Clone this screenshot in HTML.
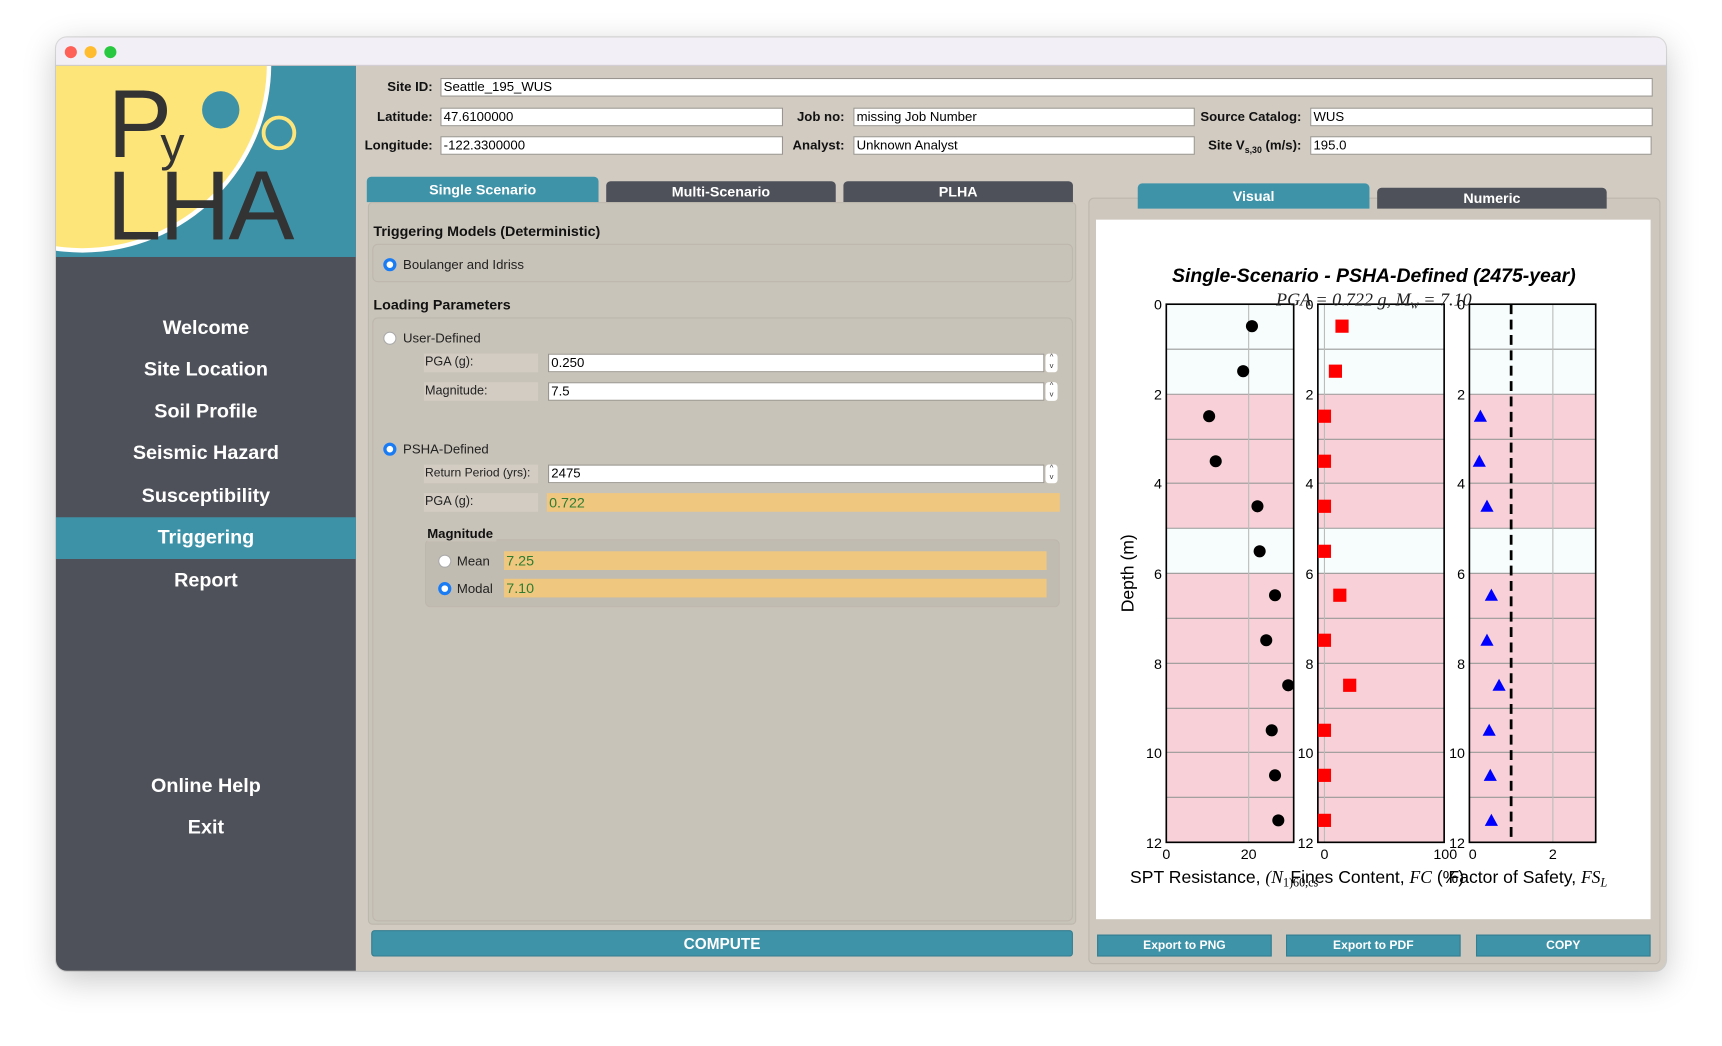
<!DOCTYPE html>
<html><head><meta charset="utf-8"><style>
*{box-sizing:border-box;margin:0;padding:0}
html,body{width:1722px;height:1045px;overflow:hidden;background:#fff;font-family:"Liberation Sans",Arial,sans-serif}
#w{position:absolute;left:0;top:0;width:1568px;height:952px;transform:scale(1.09821);transform-origin:0 0}
.a{position:absolute}
.win{left:51px;top:34px;width:1466px;height:850px;border-radius:10px;overflow:hidden;background:#d1cbc2;box-shadow:0 8px 30px rgba(0,0,0,.22),0 0 0 1px rgba(0,0,0,.12)}
.tl{width:11px;height:11px;border-radius:50%;top:8px}
.nav{width:273px;text-align:center;color:#fff;font-weight:bold;font-size:18px;left:0}
.lab{font-size:12px;font-weight:bold;color:#111;text-align:right;white-space:nowrap}
.inp{background:#fff;border:1px solid #9a968f;height:17px;font-size:12px;padding-left:2px;line-height:15px;color:#000}
.tab{color:#fff;font-weight:bold;font-size:13px;text-align:center;border-radius:4px 4px 0 0}
.gb{border:1px solid #bdb7ad;border-radius:5px;background:#c8c3b8}
.rad{width:12px;height:12px;border-radius:50%;background:#fff;border:1px solid #aaa}
.rad.on{background:#fff;border:3.5px solid #1a7cf5}
.t12{font-size:12px;color:#222}
.sl{background:#d2ccc3;font-size:11.5px;color:#222;padding-left:1px;height:17px;line-height:17px;white-space:nowrap;overflow:hidden}
.or{background:#f0c77f;color:#2e7d32;font-size:13px;padding-left:2px;height:17px;line-height:17px}
.spin{width:11px;height:17px;background:#fff;border-radius:3px;font-size:7px;line-height:8px;text-align:center;color:#333}
.btn{background:#3e93a8;color:#fff;font-weight:bold;text-align:center;border:1px solid #347e90}
</style></head><body><div id="w">
<div class="a win">
 <div class="a" style="left:0;top:0;width:1466px;height:26px;background:#f3eff6;border-bottom:1px solid #cfcbd2"></div>
 <div class="a tl" style="left:8px;background:#fe5f57"></div>
 <div class="a tl" style="left:26px;background:#febc2e"></div>
 <div class="a tl" style="left:44px;background:#28c840"></div>
 <div class="a" style="left:0;top:26px;width:273px;height:824px;background:#4e5159"></div>
 <svg class="a" style="left:0;top:26px" width="273" height="174" viewBox="51 60 273 174">
  <rect x="51" y="60" width="273" height="174" fill="#3e92a8"/>
  <circle cx="75" cy="58" r="172" fill="#fff"/>
  <circle cx="75" cy="58" r="168" fill="#fde57a"/>
  <circle cx="201" cy="100" r="17" fill="#3e92a8"/>
  <circle cx="254" cy="121" r="14" fill="none" stroke="#fde57a" stroke-width="3.5"/>
  <text x="98" y="143" font-family="Liberation Sans" font-size="88" fill="#333">P</text>
  <text x="146" y="146" font-family="Liberation Sans" font-size="44" fill="#333">y</text>
  <text x="97" y="218" font-family="Liberation Sans" font-size="90" fill="#333" letter-spacing="-2">LHA</text>
 </svg>
 <div class="a" style="left:0;top:437px;width:273px;height:38px;background:#3e92a8"></div>
 <div class="a nav" style="top:254px">Welcome</div>
 <div class="a nav" style="top:292px">Site Location</div>
 <div class="a nav" style="top:330px">Soil Profile</div>
 <div class="a nav" style="top:368px">Seismic Hazard</div>
 <div class="a nav" style="top:407px">Susceptibility</div>
 <div class="a nav" style="top:445px">Triggering</div>
 <div class="a nav" style="top:484px">Report</div>
 <div class="a nav" style="top:671px">Online Help</div>
 <div class="a nav" style="top:709px">Exit</div>
</div>
<div class="a lab" style="left:300px;width:94px;top:72px">Site ID:</div>
<div class="a inp" style="left:401px;top:71px;width:1104px">Seattle_195_WUS</div>
<div class="a lab" style="left:300px;width:94px;top:99px">Latitude:</div>
<div class="a inp" style="left:401px;top:98px;width:312px">47.6100000</div>
<div class="a lab" style="left:300px;width:94px;top:125px">Longitude:</div>
<div class="a inp" style="left:401px;top:124px;width:312px">-122.3300000</div>
<div class="a lab" style="left:690px;width:79px;top:99px">Job no:</div>
<div class="a inp" style="left:777px;top:98px;width:311px">missing Job Number</div>
<div class="a lab" style="left:690px;width:79px;top:125px">Analyst:</div>
<div class="a inp" style="left:777px;top:124px;width:311px">Unknown Analyst</div>
<div class="a lab" style="left:1090px;width:95px;top:99px">Source Catalog:</div>
<div class="a inp" style="left:1193px;top:98px;width:312px">WUS</div>
<div class="a lab" style="left:1090px;width:95px;top:125px">Site V<sub style="font-size:8px">s,30</sub> (m/s):</div>
<div class="a inp" style="left:1193px;top:124px;width:311px">195.0</div>
<div class="a tab" style="left:334px;top:161px;width:211px;height:23px;line-height:23px;background:#3e93a8">Single Scenario</div>
<div class="a tab" style="left:552px;top:165px;width:209px;height:19px;line-height:20px;background:#4e5159">Multi-Scenario</div>
<div class="a tab" style="left:768px;top:165px;width:209px;height:19px;line-height:20px;background:#4e5159">PLHA</div>
<div class="a" style="left:335px;top:184px;width:645px;height:658px;background:#c9c4b9;border:1px solid #bdb7ad;border-radius:4px"></div>
<div class="a" style="left:340px;top:203px;font-size:13px;font-weight:bold;color:#111">Triggering Models (Deterministic)</div>
<div class="a gb" style="left:339px;top:222px;width:638px;height:35px"></div>
<div class="a rad on" style="left:349px;top:235px"></div>
<div class="a t12" style="left:367px;top:234px">Boulanger and Idriss</div>
<div class="a" style="left:340px;top:270px;font-size:13px;font-weight:bold;color:#111">Loading Parameters</div>
<div class="a gb" style="left:339px;top:289px;width:638px;height:550px"></div>
<div class="a rad" style="left:349px;top:302px"></div>
<div class="a t12" style="left:367px;top:301px">User-Defined</div>
<div class="a sl" style="left:386px;top:322px;width:104px">PGA (g):</div>
<div class="a inp" style="left:499px;top:322px;width:452px">0.250</div>
<div class="a spin" style="left:952px;top:322px">^<br>v</div>
<div class="a sl" style="left:386px;top:348px;width:104px">Magnitude:</div>
<div class="a inp" style="left:499px;top:348px;width:452px">7.5</div>
<div class="a spin" style="left:952px;top:348px">^<br>v</div>
<div class="a rad on" style="left:349px;top:403px"></div>
<div class="a t12" style="left:367px;top:402px">PSHA-Defined</div>
<div class="a sl" style="left:386px;top:423px;width:104px;font-size:11px">Return Period (yrs):</div>
<div class="a inp" style="left:499px;top:423px;width:452px">2475</div>
<div class="a spin" style="left:952px;top:423px">^<br>v</div>
<div class="a sl" style="left:386px;top:449px;width:104px">PGA (g):</div>
<div class="a or" style="left:498px;top:449px;width:467px">0.722</div>
<div class="a gb" style="left:387px;top:491px;width:578px;height:62px;background:#c1bcb1"></div>
<div class="a" style="left:389px;top:479px;font-size:12px;font-weight:bold;color:#111;background:#c8c3b8;padding-right:3px">Magnitude</div>
<div class="a rad" style="left:399px;top:505px"></div>
<div class="a t12" style="left:416px;top:504px">Mean</div>
<div class="a or" style="left:459px;top:502px;width:494px">7.25</div>
<div class="a rad on" style="left:399px;top:530px"></div>
<div class="a t12" style="left:416px;top:529px">Modal</div>
<div class="a or" style="left:459px;top:527px;width:494px">7.10</div>
<div class="a btn" style="left:338px;top:847px;width:639px;height:24px;line-height:23px;font-size:14px;border-radius:3px">COMPUTE</div>
<div class="a" style="left:991px;top:180px;width:521px;height:698px;background:#cdc7bd;border:1px solid #bdb7ad;border-radius:5px"></div>
<div class="a tab" style="left:1036px;top:167px;width:211px;height:23px;line-height:24px;background:#3e93a8">Visual</div>
<div class="a tab" style="left:1254px;top:171px;width:209px;height:19px;line-height:19px;background:#4e5159">Numeric</div>
<div class="a" style="left:998px;top:200px;width:505px;height:637px;background:#fff"></div>
<div class="a btn" style="left:999px;top:851px;width:159px;height:20px;line-height:19px;font-size:11px">Export to PNG</div>
<div class="a btn" style="left:1171px;top:851px;width:159px;height:20px;line-height:19px;font-size:11px">Export to PDF</div>
<div class="a btn" style="left:1344px;top:851px;width:159px;height:20px;line-height:19px;font-size:11px">COPY</div>
<svg class="a" style="left:0;top:0" width="1568" height="952" font-family="Liberation Sans">
 <g>
  <rect x="1062" y="277" width="116" height="82" fill="#f7fdfd"/><rect x="1062" y="359" width="116" height="122" fill="#f7d1d7"/><rect x="1062" y="481" width="116" height="41" fill="#f7fdfd"/><rect x="1062" y="522" width="116" height="245" fill="#f7d1d7"/>
  <rect x="1200" y="277" width="115" height="82" fill="#f7fdfd"/><rect x="1200" y="359" width="115" height="122" fill="#f7d1d7"/><rect x="1200" y="481" width="115" height="41" fill="#f7fdfd"/><rect x="1200" y="522" width="115" height="245" fill="#f7d1d7"/>
  <rect x="1338" y="277" width="115" height="82" fill="#f7fdfd"/><rect x="1338" y="359" width="115" height="122" fill="#f7d1d7"/><rect x="1338" y="481" width="115" height="41" fill="#f7fdfd"/><rect x="1338" y="522" width="115" height="245" fill="#f7d1d7"/>
 </g>
 <g stroke="#999" stroke-width="1">
  <path d="M1062 318H1178M1062 359H1178M1062 400H1178M1062 440H1178M1062 481H1178M1062 522H1178M1062 563H1178M1062 604H1178M1062 645H1178M1062 685H1178M1062 726H1178"/>
  <path d="M1200 318H1315M1200 359H1315M1200 400H1315M1200 440H1315M1200 481H1315M1200 522H1315M1200 563H1315M1200 604H1315M1200 645H1315M1200 685H1315M1200 726H1315"/>
  <path d="M1338 318H1453M1338 359H1453M1338 400H1453M1338 440H1453M1338 481H1453M1338 522H1453M1338 563H1453M1338 604H1453M1338 645H1453M1338 685H1453M1338 726H1453"/>
  <path d="M1137 277V767M1206 277V767M1414 277V767" stroke="#bbb"/>
 </g>
 <g fill="none" stroke="#000" stroke-width="1.5">
  <rect x="1062" y="277" width="116" height="490"/><rect x="1200" y="277" width="115" height="490"/><rect x="1338" y="277" width="115" height="490"/>
 </g>
 <path d="M1376 277V767" stroke="#000" stroke-width="2.5" stroke-dasharray="9,5"/>
 <g fill="#000">
  <circle cx="1140" cy="297" r="5.5"/><circle cx="1132" cy="338" r="5.5"/><circle cx="1101" cy="379" r="5.5"/><circle cx="1107" cy="420" r="5.5"/><circle cx="1145" cy="461" r="5.5"/><circle cx="1147" cy="502" r="5.5"/><circle cx="1161" cy="542" r="5.5"/><circle cx="1153" cy="583" r="5.5"/><circle cx="1173" cy="624" r="5.5"/><circle cx="1158" cy="665" r="5.5"/><circle cx="1161" cy="706" r="5.5"/><circle cx="1164" cy="747" r="5.5"/>
 </g>
 <g fill="#f00">
  <rect x="1216" y="291" width="12" height="12"/><rect x="1210" y="332" width="12" height="12"/><rect x="1200" y="373" width="12" height="12"/><rect x="1200" y="414" width="12" height="12"/><rect x="1200" y="455" width="12" height="12"/><rect x="1200" y="496" width="12" height="12"/><rect x="1214" y="536" width="12" height="12"/><rect x="1200" y="577" width="12" height="12"/><rect x="1223" y="618" width="12" height="12"/><rect x="1200" y="659" width="12" height="12"/><rect x="1200" y="700" width="12" height="12"/><rect x="1200" y="741" width="12" height="12"/>
 </g>
 <g fill="#00f">
  <path d="M1348 373l6 11h-12z"/><path d="M1347 414l6 11h-12z"/><path d="M1354 455l6 11h-12z"/><path d="M1358 536l6 11h-12z"/><path d="M1354 577l6 11h-12z"/><path d="M1365 618l6 11h-12z"/><path d="M1356 659l6 11h-12z"/><path d="M1357 700l6 11h-12z"/><path d="M1358 741l6 11h-12z"/>
 </g>
 <g font-size="13" fill="#000" text-anchor="end">
  <text x="1058" y="282">0</text><text x="1058" y="364">2</text><text x="1058" y="445">4</text><text x="1058" y="527">6</text><text x="1058" y="609">8</text><text x="1058" y="690">10</text><text x="1058" y="772">12</text>
  <text x="1196" y="282">0</text><text x="1196" y="364">2</text><text x="1196" y="445">4</text><text x="1196" y="527">6</text><text x="1196" y="609">8</text><text x="1196" y="690">10</text><text x="1196" y="772">12</text>
  <text x="1334" y="282">0</text><text x="1334" y="364">2</text><text x="1334" y="445">4</text><text x="1334" y="527">6</text><text x="1334" y="609">8</text><text x="1334" y="690">10</text><text x="1334" y="772">12</text>
 </g>
 <g font-size="13" fill="#000" text-anchor="middle">
  <text x="1062" y="782">0</text><text x="1137" y="782">20</text><text x="1206" y="782">0</text><text x="1316" y="782">100</text><text x="1341" y="782">0</text><text x="1414" y="782">2</text>
 </g>
 <text x="1251" y="257" font-size="17.7" font-weight="bold" font-style="italic" text-anchor="middle">Single-Scenario - PSHA-Defined (2475-year)</text>
 <text x="1251" y="278" font-size="16.5" font-style="italic" font-family="Liberation Serif" text-anchor="middle" fill="#222">PGA = 0.722 g, M<tspan font-size="11" dy="3">w</tspan><tspan dy="-3"> = 7.10</tspan></text>
 <text transform="translate(1032,522) rotate(-90)" font-size="16" text-anchor="middle">Depth (m)</text>
 <text x="1029" y="804" font-size="16">SPT Resistance, <tspan font-family="Liberation Serif" font-style="italic">(N</tspan><tspan font-family="Liberation Serif" font-size="11" dy="3">1)60,cs</tspan></text>
 <text x="1175" y="804" font-size="16">Fines Content, <tspan font-family="Liberation Serif" font-style="italic">FC</tspan> (%)</text>
 <text x="1319" y="804" font-size="16">Factor of Safety, <tspan font-family="Liberation Serif" font-style="italic">FS</tspan><tspan font-family="Liberation Serif" font-style="italic" font-size="11" dy="3">L</tspan></text>
</svg>
</div></body></html>
